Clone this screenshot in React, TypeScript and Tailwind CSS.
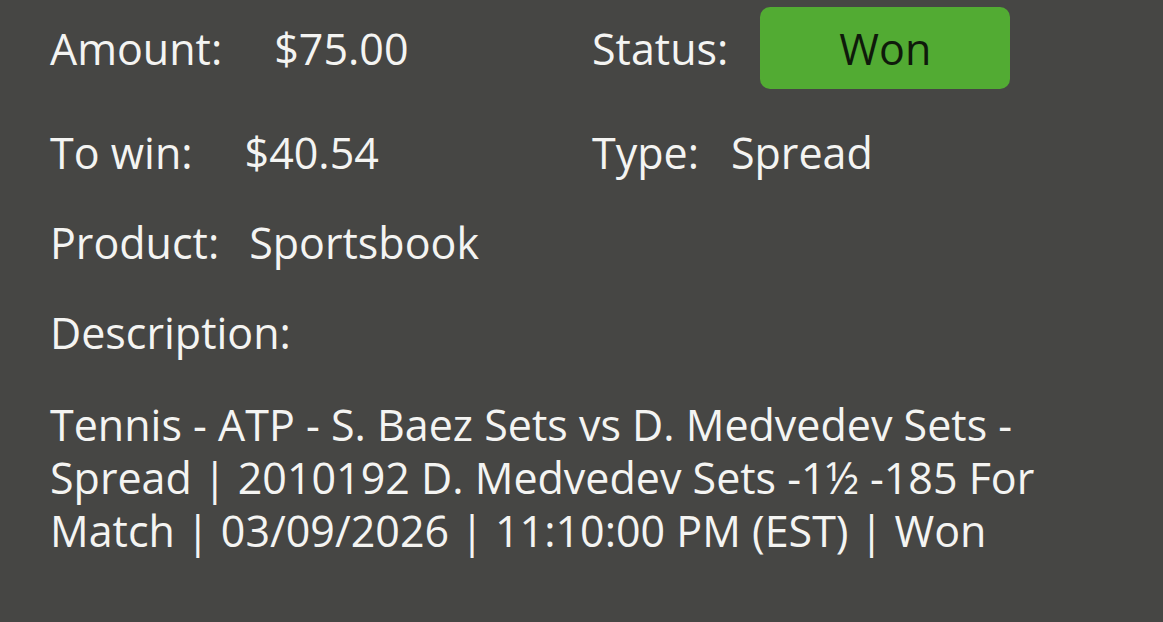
export default function App() {
  return (
    <div className="h-[622px] w-[1163px] overflow-hidden bg-[#464644] pl-[50px] pt-[7px] text-[43px] leading-[53px] text-[#f4f4f2] [font-family:'Open_Sans',sans-serif]">
      <div className="grid grid-cols-[542px_1fr] items-center">
        <div className="flex">
          <span>Amount:</span>
          <span className="ml-[52px]">$75.00</span>
        </div>
        <div className="flex items-center">
          <span>Status:</span>
          <span className="ml-[32px] flex h-[82px] w-[250px] items-center justify-center rounded-[10px] bg-[#52ab33] text-[#0f1a0b]">
            Won
          </span>
        </div>
      </div>
      <div className="mt-[37px] grid grid-cols-[542px_1fr] items-center">
        <div className="flex">
          <span>To win:</span>
          <span className="ml-[52px]">$40.54</span>
        </div>
        <div className="flex">
          <span>Type:</span>
          <span className="ml-[32px]">Spread</span>
        </div>
      </div>
      <div className="mt-[37px] flex">
        <span>Product:</span>
        <span className="ml-[30px]">Sportsbook</span>
      </div>
      <div className="mt-[37px]">Description:</div>
      <p className="mt-[39px]">
        Tennis - ATP - S. Baez Sets vs D. Medvedev Sets -<br />
        Spread | 2010192 D. Medvedev Sets -1½ -185 For<br />
        Match | 03/09/2026 | 11:10:00 PM (EST) | Won
      </p>
    </div>
  );
}
